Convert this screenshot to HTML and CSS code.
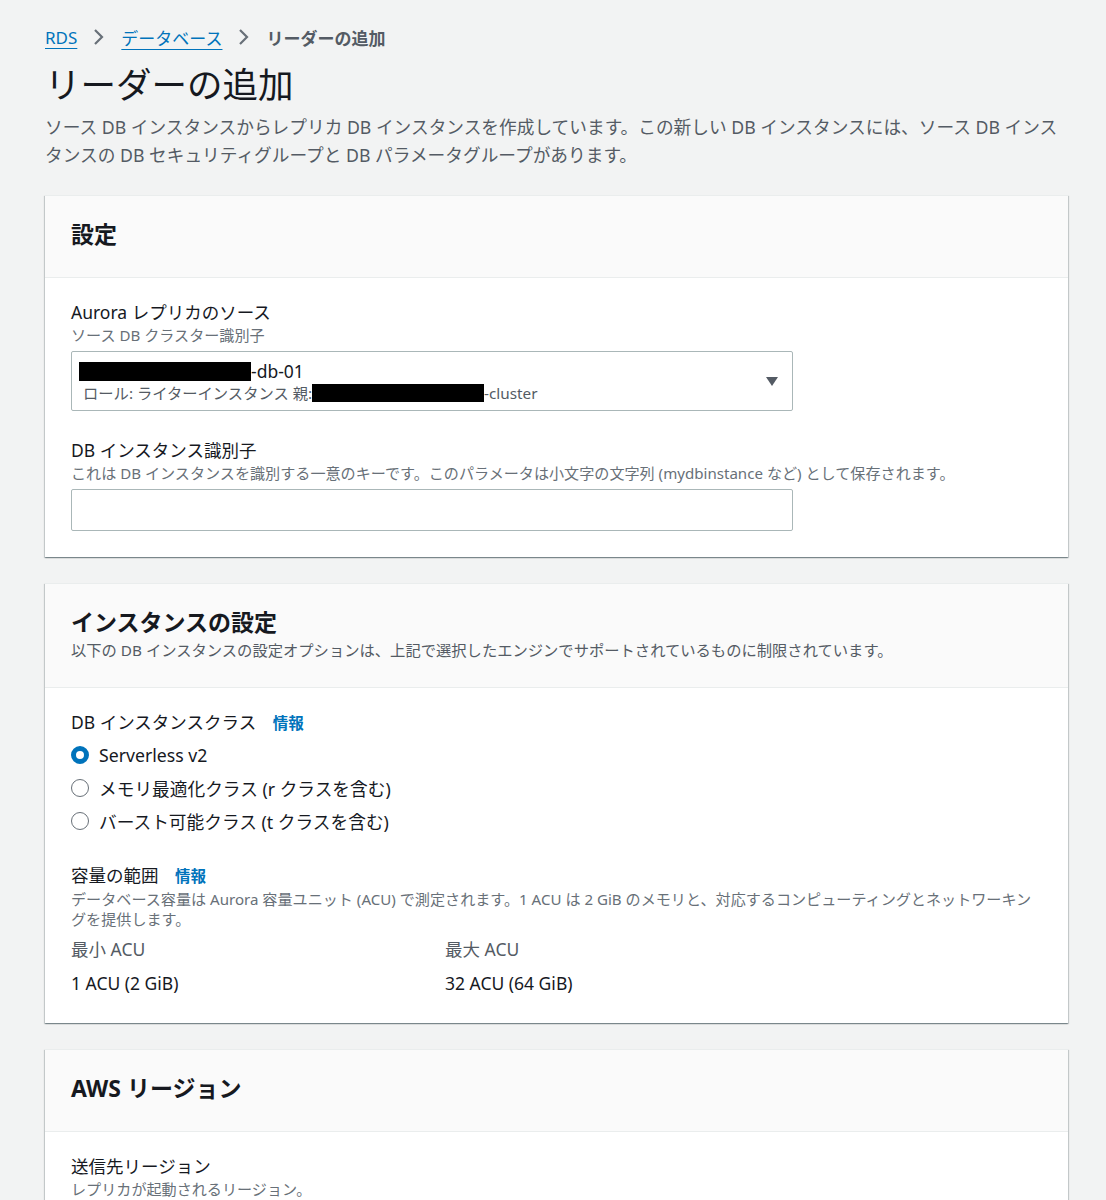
FILE: index.html
```html
<!DOCTYPE html>
<html lang="ja">
<head>
    <meta charset="UTF-8">
    <meta name="viewport" content="width=device-width, initial-scale=1.0">
    <title>リーダーの追加</title>
    <link rel="stylesheet" href="styles.css">
</head>
<body>
    <div class="page">
        <!-- Breadcrumb -->
        <nav class="breadcrumb">
            <a href="#">RDS</a>
            <span class="chevron">
                <svg width="14" height="18" viewBox="0 0 14 18"><path d="M3 2 L10 9 L3 16" fill="none" stroke="#687078" stroke-width="2.2"/></svg>
            </span>
            <a href="#">データベース</a>
            <span class="chevron">
                <svg width="14" height="18" viewBox="0 0 14 18"><path d="M3 2 L10 9 L3 16" fill="none" stroke="#687078" stroke-width="2.2"/></svg>
            </span>
            <span class="current">リーダーの追加</span>
        </nav>

        <h1 class="page-title">リーダーの追加</h1>
        <p class="page-desc">ソース DB インスタンスからレプリカ DB インスタンスを作成しています。この新しい DB インスタンスには、ソース DB インスタンスの DB セキュリティグループと DB パラメータグループがあります。</p>

        <!-- Settings -->
        <section class="card">
            <div class="card-header">
                <h2>設定</h2>
            </div>
            <div class="card-body">
                <div class="field">
                    <label>Aurora レプリカのソース</label>
                    <div class="hint">ソース DB クラスター識別子</div>
                    <div class="select">
                        <div class="select-text">
                            <div class="select-main"><span class="redact redact-main"></span>-db-01</div>
                            <div class="select-sub">ロール: ライターインスタンス 親:<span class="redact redact-sub"></span>-cluster</div>
                        </div>
                        <span class="caret"></span>
                    </div>
                </div>
                <div class="field">
                    <label>DB インスタンス識別子</label>
                    <div class="hint">これは DB インスタンスを識別する一意のキーです。このパラメータは小文字の文字列 (mydbinstance など) として保存されます。</div>
                    <input type="text" class="text-input">
                </div>
            </div>
        </section>

        <!-- Instance settings -->
        <section class="card">
            <div class="card-header">
                <h2>インスタンスの設定</h2>
                <div class="header-desc">以下の DB インスタンスの設定オプションは、上記で選択したエンジンでサポートされているものに制限されています。</div>
            </div>
            <div class="card-body">
                <div class="field">
                    <label>DB インスタンスクラス <a href="#" class="info">情報</a></label>
                    <div class="radios">
                        <div class="radio checked"><span class="dot"></span>Serverless v2</div>
                        <div class="radio"><span class="dot"></span>メモリ最適化クラス (r クラスを含む)</div>
                        <div class="radio"><span class="dot"></span>バースト可能クラス (t クラスを含む)</div>
                    </div>
                </div>
                <div class="field capacity">
                    <label>容量の範囲 <a href="#" class="info">情報</a></label>
                    <div class="hint">データベース容量は Aurora 容量ユニット (ACU) で測定されます。1 ACU は 2 GiB のメモリと、対応するコンピューティングとネットワーキングを提供します。</div>
                    <div class="acu-grid">
                        <div>
                            <div class="acu-label">最小 ACU</div>
                            <div class="acu-value">1 ACU (2 GiB)</div>
                        </div>
                        <div>
                            <div class="acu-label">最大 ACU</div>
                            <div class="acu-value">32 ACU (64 GiB)</div>
                        </div>
                    </div>
                </div>
            </div>
        </section>

        <!-- Region -->
        <section class="card">
            <div class="card-header">
                <h2>AWS リージョン</h2>
            </div>
            <div class="card-body">
                <div class="field">
                    <label>送信先リージョン</label>
                    <div class="hint">レプリカが起動されるリージョン。</div>
                </div>
            </div>
        </section>
    </div>
</body>
</html>
```

FILE: styles.css
```css
* {
    margin: 0;
    padding: 0;
    box-sizing: border-box;
}
body {
    font-family: "Noto Sans", "Noto Sans CJK JP", sans-serif;
    background-color: #f2f3f3;
    color: #16191f;
}
.page {
    padding: 22px 38px 40px 45px;
}
a {
    color: #0073bb;
}

/* ============= Breadcrumb ============= */
.breadcrumb {
    display: flex;
    align-items: center;
    gap: 15px;
    font-size: 17px;
    height: 30px;
}
.breadcrumb a {
    text-decoration: underline;
    text-underline-offset: 4px;
}
.chevron {
    display: flex;
    align-items: center;
}
.breadcrumb .current {
    color: #545b64;
    font-weight: bold;
}

/* ============= Heading ============= */
.page-title {
    font-size: 35.5px;
    font-weight: normal;
    line-height: 48px;
    margin-top: 8px;
}
.page-desc {
    font-size: 17.7px;
    line-height: 28px;
    color: #545b64;
    margin-top: 5px;
}

/* ============= Cards ============= */
.card {
    background: #fff;
    margin-top: 26px;
    border-top: 1px solid #eaeded;
    box-shadow: 0 1px 1px 0 rgba(0, 28, 36, 0.3), 1px 1px 1px 0 rgba(0, 28, 36, 0.15), -1px 1px 1px 0 rgba(0, 28, 36, 0.15);
}
.card-header {
    background: #fafafa;
    border-bottom: 1px solid #eaeded;
    padding: 21px 26px 26px;
}
.card-header h2 {
    font-size: 23px;
    font-weight: bold;
    line-height: 34px;
}
.header-desc {
    font-size: 15.3px;
    color: #545b64;
    line-height: 22px;
}
.card-body {
    padding: 21px 26px 26px;
}
.field + .field {
    margin-top: 26px;
}
.field label {
    display: block;
    font-size: 17.5px;
    line-height: 26px;
}
.hint {
    font-size: 15.1px;
    line-height: 20px;
    color: #687078;
}
.info {
    font-size: 15.5px;
    font-weight: bold;
    text-decoration: none;
    margin-left: 12px;
}

/* ============= Inputs ============= */
.select {
    width: 722px;
    height: 60px;
    margin-top: 6px;
    border: 1px solid #aab7b8;
    border-radius: 2px;
    display: flex;
    align-items: center;
    justify-content: space-between;
    padding: 0 14px 0 7px;
}
.select-main {
    display: flex;
    align-items: center;
    font-size: 17.5px;
    line-height: 24px;
}
.select-sub {
    display: flex;
    align-items: center;
    font-size: 15.3px;
    line-height: 20px;
    color: #545b64;
    padding-left: 4px;
}
.redact {
    display: inline-block;
    background: #000;
}
.redact-main {
    width: 172px;
    height: 19px;
}
.redact-sub {
    width: 172px;
    height: 18px;
}
.caret {
    width: 0;
    height: 0;
    border-left: 6px solid transparent;
    border-right: 6px solid transparent;
    border-top: 9px solid #545b64;
}
.text-input {
    display: block;
    width: 722px;
    height: 42px;
    margin-top: 6px;
    border: 1px solid #aab7b8;
    border-radius: 2px;
    background: #fff;
}

/* ============= Radios ============= */
.radios {
    margin-top: 2px;
}
.radio {
    display: flex;
    align-items: center;
    font-size: 17.7px;
    height: 33px;
}
.dot {
    width: 18px;
    height: 18px;
    border: 1.5px solid #687078;
    border-radius: 50%;
    margin-right: 10px;
}
.radio.checked .dot {
    border: 5px solid #0073bb;
}

/* ============= Capacity ============= */
.field.capacity {
    margin-top: 25px;
}
.acu-grid {
    display: grid;
    grid-template-columns: 374px 1fr;
    margin-top: 8px;
}
.acu-label {
    font-size: 17.5px;
    color: #545b64;
    line-height: 24px;
}
.acu-value {
    font-size: 17.5px;
    line-height: 28px;
    margin-top: 8px;
}
```
